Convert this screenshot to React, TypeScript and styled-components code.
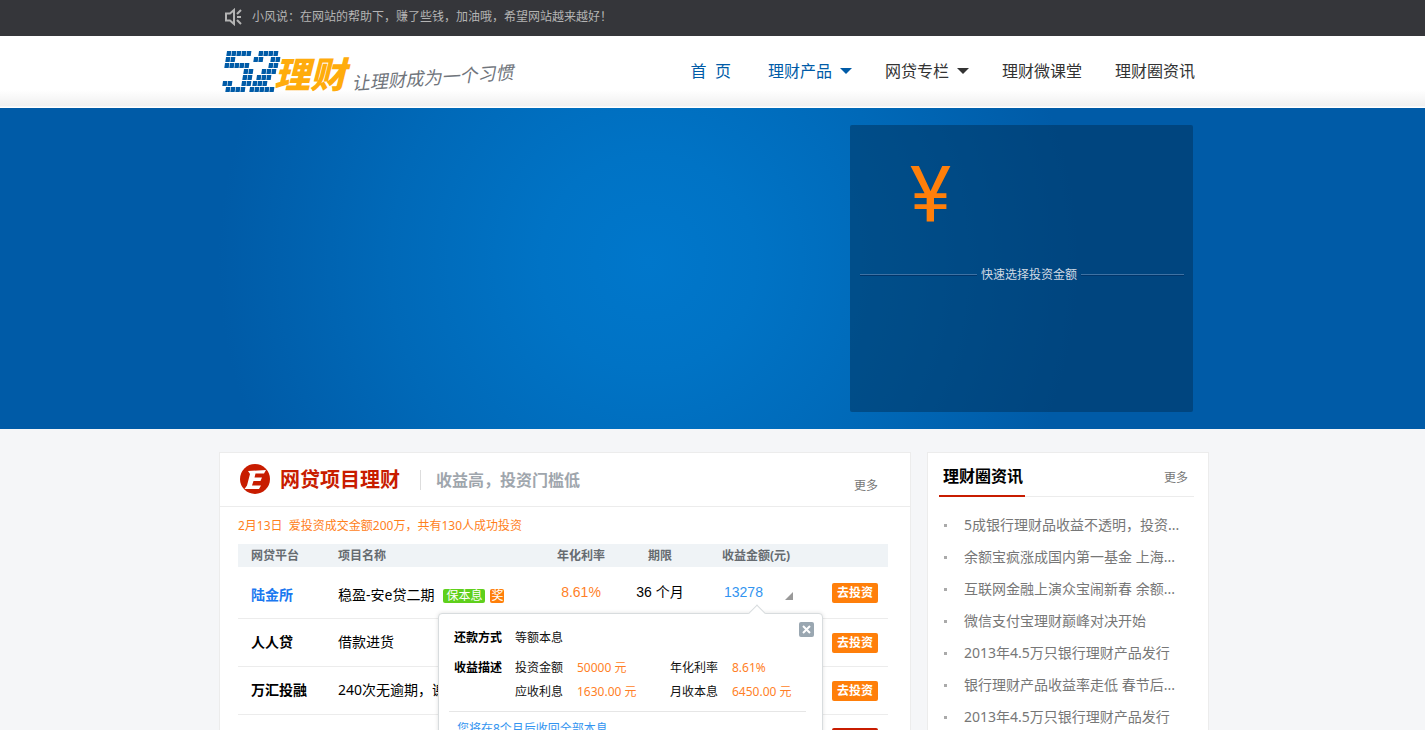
import React from "react";
import styled, { createGlobalStyle } from "styled-components";

const GlobalStyle = createGlobalStyle`
  *, *::before, *::after { box-sizing: border-box; }
  body {
    margin: 0;
    background: #f5f6f8;
    color: #000;
    font-family: "Noto Sans", "Noto Sans CJK SC", sans-serif;
    font-size: 12px;
    line-height: 20px;
  }
  a { color: inherit; text-decoration: none; }
  button { font: inherit; border: 0; padding: 0; cursor: pointer; }
  h1, h2, p, ul, dl, dd { margin: 0; padding: 0; }
  ul { list-style: none; }
`;

const Page = styled.div`
  height: 100vh;
  overflow-x: hidden;
  overflow-y: auto;
  scrollbar-width: none;
`;

const Container = styled.div`
  width: 100%;
  max-width: 993px;
  margin: 0 auto;
  padding-left: 3px;
  display: flex;
`;

const TopBar = styled.div`
  background: #35363a;
  color: #b4b4b4;
`;

const Notice = styled(Container)`
  height: 36px;
  align-items: center;
  padding: 0 0 2px 9px;
  gap: 10px;
`;

const Header = styled.header`
  background: linear-gradient(#fff 0, #fff 54px, #f0f0f0 70px, #fff 71px);
`;

const HeaderInner = styled(Container)`
  height: 72px;
  justify-content: space-between;
`;

const Brand = styled.a`
  display: block;
`;

const Nav = styled.nav`
  display: flex;
  align-items: center;
  gap: 33px;
  padding: 0 14px 2px 0;
  font-size: 16px;
`;

const NavLink = styled.a<{ $active?: boolean; $home?: boolean }>`
  display: flex;
  align-items: center;
  gap: 8px;
  padding-right: ${(p) => (p.$home ? "4px" : "0")};
  white-space: pre;
  color: ${(p) => (p.$active ? "#005ba7" : "#333")};
`;

const Caret = styled.i`
  border: 6px solid transparent;
  border-top-color: currentColor;
  border-bottom: 0;
`;

const Banner = styled.section`
  background: radial-gradient(circle 430px at 45.5% 48%, #0077cb 0, #0073c5 25%, #0069b8 60%, #005ba7 100%);
`;

const BannerInner = styled(Container)`
  height: 321px;
  align-items: center;
  justify-content: flex-end;
  padding-right: 16px;
`;

const QuickPanel = styled.div`
  width: 343px;
  height: 287px;
  margin-bottom: 1px;
  padding: 26px 9px 0 10px;
  border-radius: 2px;
  background: rgba(0, 48, 88, 0.5);
`;

const Yen = styled.div`
  padding-left: 50px;
  height: 114px;
  color: #ff7f0a;
  font-family: Roboto, sans-serif;
  font-size: 78px;
  line-height: 88px;
`;

const QuickTitle = styled.div`
  display: grid;
  grid-template-columns: 117px auto 1fr;
  align-items: center;
  gap: 4px;
  color: #d0dae4;

  &::before, &::after {
    content: "";
    height: 2px;
    background: linear-gradient(#3f72a3 50%, #00356a 50%);
  }
`;

const Main = styled(Container)`
  padding-top: 23px;
  gap: 16px;
  align-items: stretch;
`;

const Card = styled.section`
  background: #fff;
  border: 1px solid #ececec;
`;

const Projects = styled(Card)`
  flex: 1;
  min-width: 0;
`;

const ProjectsHead = styled.header`
  display: flex;
  align-items: center;
  height: 54px;
  padding: 0 32px 0 20px;
  border-bottom: 1px solid #ececec;

  svg { margin-bottom: 2px; }
`;

const ProjectsTitle = styled.h1`
  margin-left: 10px;
  color: #c81c00;
  font-size: 20px;
  line-height: 30px;
`;

const Tagline = styled.p`
  flex: 1;
  margin-left: 20px;
  padding-left: 15px;
  border-left: 1px solid #ddd;
  color: #9fa6ad;
  font-size: 16px;
  font-weight: bold;
`;

const More = styled.a`
  align-self: flex-end;
  padding-bottom: 10px;
  color: #777;
`;

const ProjectsBody = styled.div`
  position: relative;
  padding: 9px 22px 12px 18px;
`;

const DealNote = styled.p`
  color: #ff7f1c;
  margin-bottom: 8px;
  white-space: pre;
`;

const Table = styled.table`
  width: 100%;
  table-layout: fixed;
  border-collapse: collapse;

  th, td { padding: 0; text-align: left; font-size: 14px; white-space: nowrap; }
  thead th { height: 23px; background: #eff3f6; color: #666b70; font-size: 12px; }
  tbody tr { height: 48px; border-bottom: 1px solid #ececec; }
  tbody tr:first-child { height: 51px; }
  tbody tr:first-child > :nth-child(-n + 2) { padding-top: 6px; }
  tbody tr:last-child { height: 46px; }
  th:first-child { padding-left: 13px; }
  th:nth-child(3), td:nth-child(3),
  th:nth-child(4), td:nth-child(4) { text-align: center; }
  th:nth-child(5) { padding-left: 26px; }
  td:nth-child(5) { padding-left: 28px; }
  td:last-child { text-align: right; padding-right: 10px; }
`;

const Platform = styled.th<{ $link?: boolean }>`
  color: ${(p) => (p.$link ? "#1a78f0" : "#000")};
`;

const Tag = styled.span<{ $color: string }>`
  display: inline-block;
  margin-left: 9px;
  padding: 0 3px;
  border-radius: 2px;
  background: ${(p) => p.$color};
  color: #fff;
  font-size: 12px;
  line-height: 14px;

  & + & { margin-left: 5px; padding: 0 1px; }
`;

const Rate = styled.td`
  color: #ff7f27;
  font-family: "Liberation Sans", sans-serif;
`;

const Term = styled.td`
  font-family: "Liberation Sans", "Noto Sans CJK SC", sans-serif;
`;

const Amount = styled.span`
  display: flex;
  align-items: center;
  gap: 22px;
  color: #3294f0;
  font-family: "Liberation Sans", sans-serif;
`;

const Corner = styled.i`
  margin-top: 8px;
  border: 4px solid #999;
  border-top-color: transparent;
  border-left-color: transparent;
`;

const InvestButton = styled.button<{ $color?: string }>`
  width: 46px;
  height: 20px;
  border-radius: 2px;
  background: ${(p) => p.$color ?? "#ff7f0a"};
  color: #fff;
  font-size: 12px;
  font-weight: bold;
  line-height: 20px;
  vertical-align: middle;
`;

const Popup = styled.div`
  position: absolute;
  left: 218px;
  top: 106px;
  width: 385px;
  padding: 12px 16px 12px 15px;
  background: #fff;
  border: 1px solid #d8dcde;
  border-radius: 4px;
  box-shadow: 0 0 4px rgba(0, 0, 0, 0.12);

  &::before {
    content: "";
    position: absolute;
    left: 312px;
    top: -7px;
    width: 12px;
    height: 12px;
    background: #fff;
    border: 1px solid #d8dcde;
    border-right: 0;
    border-bottom: 0;
    transform: rotate(45deg);
  }
`;

const CloseButton = styled.button`
  position: absolute;
  right: 8px;
  top: 8px;
  width: 15px;
  height: 15px;
  border-radius: 2px;
  background: #9aa7b1;

  svg { display: block; }
`;

const Details = styled.dl`
  display: grid;
  grid-template-columns: 61px 62px 93px 62px auto;
  line-height: 24px;
  color: #111;
`;

const Label = styled.dt`
  font-weight: bold;
  color: #000;
`;

const Value = styled.dd<{ $wide?: boolean; $push?: boolean; $hot?: boolean }>`
  grid-column: ${(p) => (p.$wide ? "span 4" : p.$push ? "2" : "auto")};
  margin-bottom: ${(p) => (p.$wide ? "6px" : "0")};
  color: ${(p) => (p.$hot ? "#ff7f27" : "inherit")};
`;

const PopupNote = styled.p`
  margin: 7px 0 0 -5px;
  padding: 7px 0 0 8px;
  border-top: 1px solid #e6e6e6;
  color: #3294f0;
`;

const News = styled(Card)`
  flex: 0 0 282px;
  padding: 0 14px 0 11px;
`;

const NewsHead = styled.header`
  display: flex;
  justify-content: space-between;
  height: 44px;
  padding-right: 6px;
  border-bottom: 1px solid #ececec;
`;

const NewsTitle = styled.h2`
  width: 86px;
  height: 44px;
  padding-left: 4px;
  border-bottom: 2px solid #c81c00;
  font-size: 16px;
  line-height: 46px;
`;

const NewsMore = styled(More)`
  padding-bottom: 8px;
`;

const NewsList = styled.ul`
  padding-top: 12px;
`;

const NewsItem = styled.li`
  display: flex;
  align-items: center;
  gap: 17px;
  padding-left: 5px;
  color: #777;
  font-size: 14px;
  line-height: 32px;
  white-space: nowrap;

  &::before {
    content: "";
    width: 3px;
    height: 3px;
    background: #aaa;
  }
`;

/* The mosaic "52": for each row of tiles, runs of [start x, number of tiles]. */
const mosaic: [number, number][][] = [
  [[7, 5], [39, 4]],
  [[6, 2], [34, 2], [51, 2]],
  [[5, 5], [49, 2]],
  [[24, 2], [42, 3]],
  [[23, 2], [37, 3]],
  [[3, 2], [22, 2], [33, 3]],
  [[6, 4], [30, 5]],
];

function Logo() {
  return (
    <svg width="300" height="72" viewBox="0 0 300 72" role="img" aria-label="52理财 让理财成为一个习惯">
      <g fill="#005ba7">
        {mosaic.map((runs, row) =>
          runs.map(([start, count]) =>
            Array.from({ length: count }, (_, i) => (
              <rect
                key={`${row}-${start}-${i}`}
                width="4.4"
                height="5"
                transform={`translate(${start + i * 5 + 1} ${15 + row * 6}) skewX(-8)`}
              />
            )),
          ),
        )}
      </g>
      <text x="55" y="52" fill="#ffac0c" fontSize="36" fontWeight="900" fontStyle="italic">理财</text>
      <text x="133" y="54" fill="#70757c" fontSize="18" fontStyle="italic" transform="rotate(-4 133 54)">让理财成为一个习惯</text>
    </svg>
  );
}

const news = [
  "5成银行理财品收益不透明，投资...",
  "余额宝疯涨成国内第一基金 上海...",
  "互联网金融上演众宝闹新春 余额...",
  "微信支付宝理财巅峰对决开始",
  "2013年4.5万只银行理财产品发行",
  "银行理财产品收益率走低 春节后...",
  "2013年4.5万只银行理财产品发行",
];

export default function App() {
  return (
    <Page>
      <GlobalStyle />
      <TopBar>
        <Notice>
          <svg width="17" height="18" viewBox="0 0 17 18" fill="none" stroke="#b4b4b4" strokeWidth="2">
            <path d="M1 5.5h4l4-3.500v14l-4-3.500H1zM12 6l4-4M12 9h4M12 12l4 4" />
          </svg>
          小风说：在网站的帮助下，赚了些钱，加油哦，希望网站越来越好！
        </Notice>
      </TopBar>
      <Header>
        <HeaderInner>
          <Brand href="#"><Logo /></Brand>
          <Nav>
            <NavLink href="#" $active $home>首  页</NavLink>
            <NavLink href="#" $active>理财产品<Caret /></NavLink>
            <NavLink href="#">网贷专栏<Caret /></NavLink>
            <NavLink href="#">理财微课堂</NavLink>
            <NavLink href="#">理财圈资讯</NavLink>
          </Nav>
        </HeaderInner>
      </Header>
      <Banner>
        <BannerInner>
          <QuickPanel>
            <Yen>¥</Yen>
            <QuickTitle>快速选择投资金额</QuickTitle>
          </QuickPanel>
        </BannerInner>
      </Banner>
      <Main as="main">
        <Projects>
          <ProjectsHead>
            <svg width="30" height="30" viewBox="0 0 30 30">
              <circle cx="15" cy="15" r="15" fill="#c81c00" />
              <path d="M8 7L26 6L24 9.500H15.500L14.500 13.500H22L20.500 17H13.500L12 21.500H21L19 25H4.500L7 21.500L10 10Z" fill="#fff" />
            </svg>
            <ProjectsTitle>网贷项目理财</ProjectsTitle>
            <Tagline>收益高，投资门槛低</Tagline>
            <More href="#">更多</More>
          </ProjectsHead>
          <ProjectsBody>
            <DealNote>2月13日  爱投资成交金额200万，共有130人成功投资</DealNote>
            <Table>
              <colgroup>
                <col width="100" />
                <col width="200" />
                <col width="86" />
                <col width="72" />
                <col width="120" />
                <col />
              </colgroup>
              <thead>
                <tr>
                  <th>网贷平台</th>
                  <th>项目名称</th>
                  <th>年化利率</th>
                  <th>期限</th>
                  <th>收益金额(元)</th>
                  <th aria-label="操作" />
                </tr>
              </thead>
              <tbody>
                <tr>
                  <Platform scope="row" $link><a href="#">陆金所</a></Platform>
                  <td>稳盈-安e贷二期<Tag $color="#5fd01c">保本息</Tag><Tag $color="#ff7f0a">奖</Tag></td>
                  <Rate>8.61%</Rate>
                  <Term>36 个月</Term>
                  <td><Amount>13278<Corner /></Amount></td>
                  <td><InvestButton>去投资</InvestButton></td>
                </tr>
                <tr>
                  <Platform scope="row">人人贷</Platform>
                  <td>借款进货</td><td /><td /><td />
                  <td><InvestButton>去投资</InvestButton></td>
                </tr>
                <tr>
                  <Platform scope="row">万汇投融</Platform>
                  <td>240次无逾期，谢</td><td /><td /><td />
                  <td><InvestButton>去投资</InvestButton></td>
                </tr>
                <tr>
                  <td /><td /><td /><td /><td />
                  <td><InvestButton $color="#c81c00">去投资</InvestButton></td>
                </tr>
              </tbody>
            </Table>
            <Popup>
              <CloseButton aria-label="关闭">
                <svg width="15" height="15" viewBox="0 0 15 15" stroke="#fff" strokeWidth="2">
                  <path d="M4 4l7 7M11 4l-7 7" />
                </svg>
              </CloseButton>
              <Details>
                <Label>还款方式</Label><Value $wide>等额本息</Value>
                <Label>收益描述</Label><Value>投资金额</Value><Value $hot>50000 元</Value>
                <Value>年化利率</Value><Value $hot>8.61%</Value>
                <Value $push>应收利息</Value><Value $hot>1630.00 元</Value>
                <Value>月收本息</Value><Value $hot>6450.00 元</Value>
              </Details>
              <PopupNote>您将在8个月后收回全部本息</PopupNote>
            </Popup>
          </ProjectsBody>
        </Projects>
        <News>
          <NewsHead>
            <NewsTitle>理财圈资讯</NewsTitle>
            <NewsMore href="#">更多</NewsMore>
          </NewsHead>
          <NewsList>
            {news.map((title, i) => (
              <NewsItem key={i}><a href="#">{title}</a></NewsItem>
            ))}
          </NewsList>
        </News>
      </Main>
    </Page>
  );
}
